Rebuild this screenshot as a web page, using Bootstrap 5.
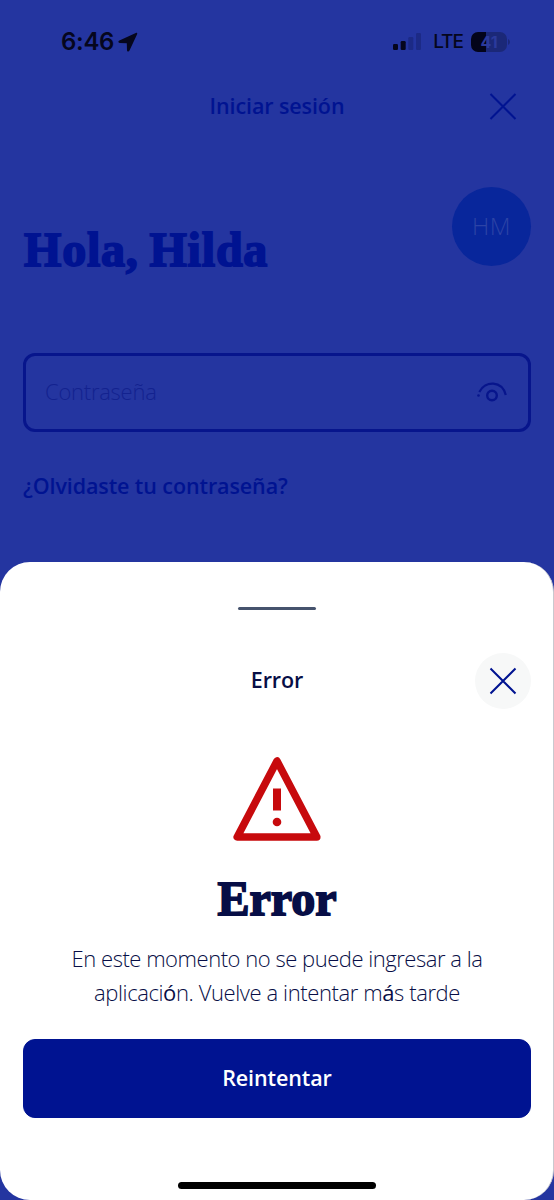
<!DOCTYPE html>
<html lang="es">
<head>
<meta charset="utf-8">
<meta name="viewport" content="width=device-width, initial-scale=1">
<title>Iniciar sesión</title>
<link href="https://cdn.jsdelivr.net/npm/bootstrap@5.3.0/dist/css/bootstrap.min.css" rel="stylesheet">
<style>
  body { background: #2435a0; font-family: "Open Sans", "Noto Sans", sans-serif; color: #070e46; overflow: hidden; }
  .screen { width: 554px; height: 1200px; }
  .login-area { height: 562px; padding: 0 23px; color: #001391; }
  .status-bar { height: 83px; color: #05061d; padding: 0 21px 0 38px; }
  .clock { font: 600 24px/1 Inter, sans-serif; letter-spacing: -.3px; }
  .network { font: 500 19px/1 Inter, sans-serif; letter-spacing: -1px; }
  .battery { width: 36px; height: 20px; border-radius: 7px; background: linear-gradient(90deg, #03041a 42%, #1b2878 42%); color: #2b3a9c; font: 700 16px/20px Inter, sans-serif; }
  .title-row { display: grid; grid-template-columns: 56px 1fr 56px; align-items: center; height: 56px; }
  .bar-title { font-size: 21.5px; font-weight: 560; line-height: 30px; text-align: center; letter-spacing: -.1px; }
  .login-area .title-row { margin-top: -5px; }
  .serif-title { font: 700 48px/56px "Liberation Serif", serif; -webkit-text-stroke: 1.8px currentColor; white-space: nowrap; }
  .greeting { height: 79px; margin-top: 53px; }
  .greeting .serif-title { margin: 35px 0 0 1px; letter-spacing: .8px; word-spacing: -2px; }
  .avatar { width: 79px; height: 79px; background: #08269b; color: #2c43a6; font-size: 24px; font-weight: 300; letter-spacing: .5px; padding-bottom: 2px; }
  .password-box { height: 79px; margin-top: 87px; border: 3px solid #07158c; border-radius: 12px; padding: 0 20px 0 19px; }
  .password-box span { font-size: 22px; font-weight: 300; color: #13228f; letter-spacing: -.25px; padding-bottom: 2px; }
  .password-box svg { margin-bottom: 2px; }
  .forgot { display: block; margin-top: 38px; font-size: 21.5px; line-height: 32px; font-weight: 560; letter-spacing: -.1px; color: #001391; text-decoration: none; white-space: nowrap; }
  .sheet { height: 638px; background: #fff; border-radius: 30px; border-right: 1px solid #c9c9cf; padding: 45px 22px 0 23px; }
  .handle { width: 78px; height: 3px; border-radius: 2px; background: #46536d; }
  .sheet .title-row { margin-top: 43px; width: 508px; }
  .sheet .bar-title { padding-bottom: 2px; }
  .close-circle { width: 56px; height: 56px; background: #f7f8f8; }
  .warning { margin-top: 46px; }
  .sheet .serif-title { margin: 30px 0 0; }
  .message { margin: 14px 0 0; font-size: 22px; line-height: 34px; font-weight: 320; white-space: nowrap; }
  .message b { font-weight: 500; }
  .line-one { letter-spacing: -.47px; }
  .line-two { letter-spacing: -.4px; }
  .retry { --bs-btn-bg: #001391; --bs-btn-border-color: #001391; --bs-btn-color: #fff; width: 508px; height: 79px; margin-top: 30px; border-radius: 12px; font-size: 21.5px; font-weight: 560; letter-spacing: -.1px; }
  .home-line { width: 198px; height: 7px; border-radius: 4px; background: #000; margin-top: 64px; }
</style>
</head>
<body>
<div class="screen d-flex flex-column">
  <main class="login-area">
    <div class="status-bar d-flex align-items-center justify-content-between">
      <div class="d-flex align-items-center gap-1">
        <span class="clock">6:46</span>
        <svg width="20" height="20" viewBox="0 0 20 20" fill="currentColor"><path d="M17.8.9 1.4 8.4C-.1 9.1.1 10.9 1.8 11l7 .2.2 7c.1 1.7 1.8 1.9 2.5.4L19.1 2.2C19.6 1.1 18.9.4 17.8.9z"/></svg>
      </div>
      <div class="d-flex align-items-center">
        <svg width="28" height="17" viewBox="0 0 28 17" fill="currentColor"><rect y="11" width="5" height="6" rx="1.3"/><rect x="7.7" y="8" width="5" height="9" rx="1.3"/><g fill="#1c2a86"><rect x="15.3" y="4" width="5" height="13" rx="1.3"/><rect x="23" width="5" height="17" rx="1.3"/></g></svg>
        <span class="network ms-2 ps-1">LTE</span>
        <span class="battery text-center ms-2">41</span>
        <svg width="3" height="8" viewBox="0 0 3 8"><path d="M1 1v6q2-1 2-3T1 1" fill="#1b2878"/></svg>
      </div>
    </div>
    <header class="title-row">
      <span></span><span class="bar-title">Iniciar sesión</span>
      <svg class="m-auto" width="28" height="28" viewBox="0 0 28 28" stroke="#001391" stroke-width="2"><path d="m1.5 2 25 25m0-25-25 25"/></svg>
    </header>
    <section class="greeting d-flex justify-content-between">
      <h1 class="serif-title">Hola, Hilda</h1>
      <div class="avatar rounded-circle d-flex align-items-center justify-content-center">HM</div>
    </section>
    <div class="password-box d-flex align-items-center justify-content-between">
      <span>Contraseña</span>
      <svg width="32" height="24" viewBox="0 0 32 24" fill="none" stroke="#07158c" stroke-width="2.2"><path d="M3.3 12C9 .4 26 .2 29.8 15"/><circle cx="16" cy="15.5" r="4.8" stroke-width="2.4"/><circle cx="2.5" cy="15.5" r="1.3" fill="#07158c" stroke="none"/></svg>
    </div>
    <a class="forgot" href="#">¿Olvidaste tu contraseña?</a>
  </main>
  <section class="sheet d-flex flex-column align-items-center text-center">
    <div class="handle"></div>
    <div class="title-row">
      <span></span><span class="bar-title">Error</span>
      <span class="close-circle rounded-circle d-flex align-items-center justify-content-center"><svg width="28" height="28" viewBox="0 0 28 28" stroke="#001391" stroke-width="2"><path d="m1.5 1.5 25 25m0-25-25 25"/></svg></span>
    </div>
    <svg class="warning flex-shrink-0" width="88" height="86" viewBox="0 0 88 86"><path d="M44 6 4.2 82h79.6z" fill="none" stroke="#c70a0d" stroke-width="7.5" stroke-linejoin="round"/><path d="M40 33.5h8v22h-8z" fill="#c70a0d"/><circle cx="44" cy="67" r="4.3" fill="#c70a0d"/></svg>
    <h2 class="serif-title">Error</h2>
    <p class="message"><span class="line-one">En este momento no se puede ingresar a la</span><br><span class="line-two">aplicaci<b>ó</b>n. Vuelve a intentar m<b>á</b>s tarde</span></p>
    <button class="btn retry">Reintentar</button>
    <div class="home-line"></div>
  </section>
</div>
<script src="https://cdn.jsdelivr.net/npm/bootstrap@5.3.0/dist/js/bootstrap.bundle.min.js"></script>
</body>
</html>
